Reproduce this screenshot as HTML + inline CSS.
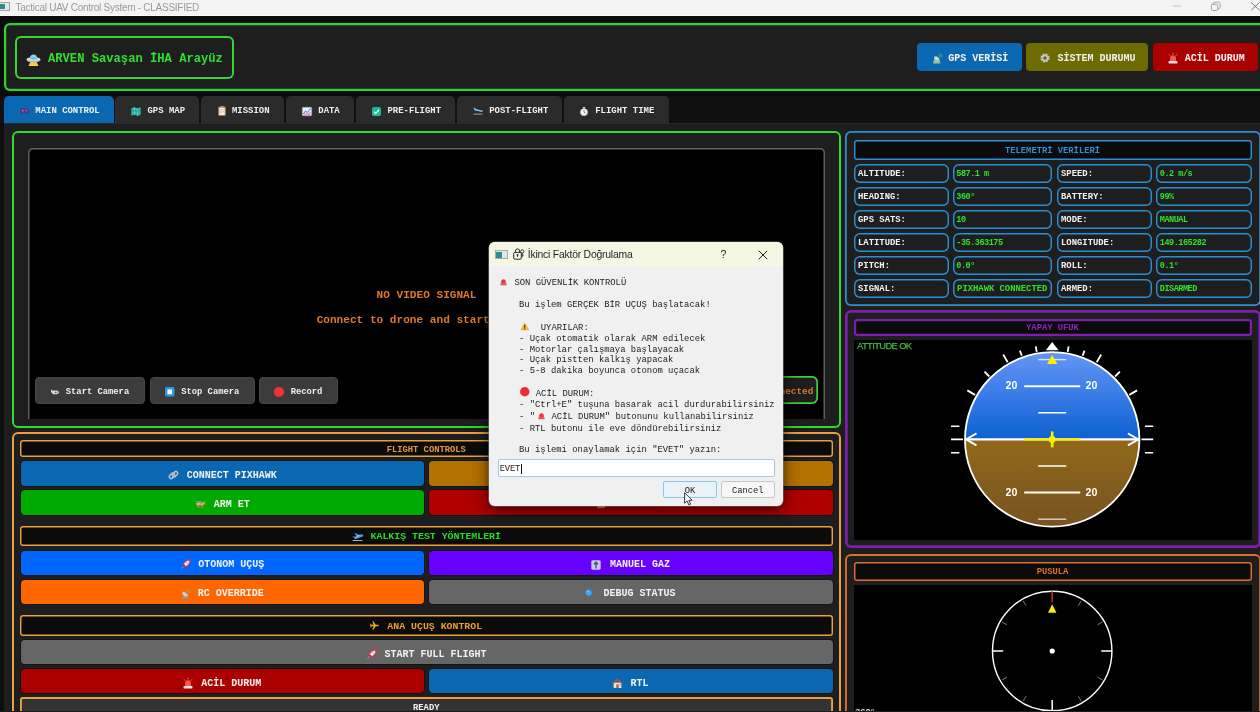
<!DOCTYPE html>
<html lang="tr">
<head>
<meta charset="utf-8">
<title>Tactical UAV Control System - CLASSIFIED</title>
<style>
html,body{margin:0;padding:0;background:#0c0c0c;}
#root{will-change:transform;position:relative;width:1260px;height:712px;overflow:hidden;background:#0c0c0c;font-family:"Liberation Mono",monospace;font-weight:bold;color:#fff;}
#root div,#root span{box-sizing:border-box;}
.a{position:absolute;}
.c{display:flex;align-items:center;justify-content:center;white-space:pre;padding-top:2px;}
.l{display:flex;align-items:center;justify-content:flex-start;white-space:pre;padding-top:2px;}
svg{display:block;overflow:visible;}
.ic{display:inline-block;flex:none;}
/* title bar */
#tb{left:0;top:0;width:1260px;height:16.3px;background:#f3f3f3;border-bottom:1px solid #fdfdfd;font-family:"Liberation Sans",sans-serif;font-weight:normal;color:#9a9a9a;}
/* panels */
.panel{border-radius:6px;background:#1e1e1e;}
.hd{background:#0b0b0b;border-radius:3px;font-size:8.8px;box-shadow:inset 0 0 0 var(--bw,1.45px) var(--bc);}
.btn{position:absolute;border-radius:4px;font-size:10px;color:#f2f2f2;box-shadow:0 0 0 1px #141414;padding-top:4.4px;}
.tab{top:95.5px;height:27.5px;background:#2b2b2b;border-radius:5px 5px 0 0;font-size:8.95px;color:#f0f0f0;padding-left:2.5px;padding-top:4px;}
.cell{height:19px;border-radius:6px;background:#1e1e1e;font-size:8.9px;padding-left:4.5px;box-shadow:inset 0 0 0 1.45px #2a8fd4;}
.lab{color:#f2f2f2;}
.val{color:#2fe02f;font-size:8.5px;letter-spacing:-0.48px;padding-left:3.8px;}
.val.w{font-size:8.85px;letter-spacing:0;padding-left:4.6px;}
.dl{left:0;font-size:8.9px;line-height:11px;height:11px;white-space:pre;color:#1c1c1c;font-weight:normal;}
</style>
</head>
<body>
<div id="root">

<!-- ===== window title bar ===== -->
<div id="tb" class="a">
  <div class="a" style="left:0;top:1.5px;width:10px;height:9px;background:#e4e8ea;border:1px solid #9aa3a8;border-left:none;"><div class="a" style="left:0;top:1px;width:4.5px;height:5px;background:#2c8c86;"></div></div>
  <div class="a" id="tbt" style="left:15.5px;top:0.6px;height:13.5px;line-height:13.5px;font-size:10px;white-space:pre;letter-spacing:-0.27px;">Tactical UAV Control System - CLASSIFIED</div>
  <svg class="a" style="left:1170px;top:0" width="90" height="16" viewBox="0 0 90 16"><g fill="none"><path d="M2.7 6h8" stroke="#c2c2c2" stroke-width="1.1"/><g stroke="#a4a4a4" stroke-width="1"><rect x="41.4" y="4.2" width="6.3" height="6.3" rx="1.5"/><path d="M43.3 4.2v-0.4a1.6 1.6 0 0 1 1.6-1.6h3.5a1.6 1.6 0 0 1 1.6 1.6v3.5a1.6 1.6 0 0 1-1.6 1.6h-0.6"/></g><path d="M81.2 2.5l8.3 7.8M89.5 2.5l-8.3 7.8" stroke="#6e6e6e" stroke-width="0.9"/></g></svg>
</div>

<!-- ===== header panel ===== -->
<div class="a panel" style="left:3.5px;top:23px;width:1280px;height:67.5px;box-shadow:inset 0 0 0 2.2px #2fd42f;"></div>
<div class="a l" style="left:15px;top:35.5px;width:218.5px;height:43px;box-shadow:inset 0 0 0 2px #31d831;border-radius:6px;font-size:12.15px;color:#2fe02f;padding-left:10.5px;padding-top:3.4px;"><span class="ic" style="width:15px;height:13px;margin-right:7.5px;position:relative;top:0.5px"><svg width="15" height="13" viewBox="0 0 15 13"><path d="M4.5 8.5 L2.5 13 H12.5 L10.5 8.5Z" fill="#f2d23c"/><ellipse cx="7.5" cy="6.8" rx="7.2" ry="2.6" fill="#a9b4bd"/><ellipse cx="7.5" cy="6.2" rx="6.6" ry="1.9" fill="#d5dde3"/><path d="M3.9 5.3a3.6 3.8 0 0 1 7.2 0Z" fill="#8fd0e8"/><ellipse cx="7.5" cy="5.4" rx="3.6" ry="1" fill="#6db6d2"/></svg></span>ARVEN Savaşan İHA Arayüz</div>

<!-- header buttons -->
<div class="a c" style="left:917px;top:43px;width:104.5px;height:28px;background:#0a67b1;border-radius:4px;font-size:10px;color:#f2f2f2;padding-left:2px;"><span class="ic" style="width:10px;height:11px;margin-right:6px;"><svg width="10" height="11" viewBox="0 0 10 11"><path d="M1 10.5 L2.5 5 L7 5 L8.5 10.5Z" fill="#9fc2a6"/><path d="M2 3.5 A3.2 3.2 0 0 0 7.6 5.8 L5 3.4Z" fill="#cfe3d2"/><path d="M6.6 2.6a2 2 0 0 1 1.6 1.8M7 0.8a3.6 3.6 0 0 1 3 3.2" stroke="#58c45c" stroke-width="0.9" fill="none"/></svg></span>GPS VERİSİ</div>
<div class="a c" style="left:1026px;top:43px;width:122px;height:28px;background:#6b6b00;border-radius:4px;font-size:10px;color:#f2f2f2;padding-left:2px;"><span class="ic" style="width:10px;height:10px;margin-right:7px;"><svg width="10" height="10" viewBox="0 0 10 10"><circle cx="5" cy="5" r="3.4" fill="none" stroke="#c4c4cc" stroke-width="2.4" stroke-dasharray="1.7 1"/><circle cx="5" cy="5" r="2.6" fill="none" stroke="#c4c4cc" stroke-width="1.6"/></svg></span>SİSTEM DURUMU</div>
<div class="a c" style="left:1153px;top:43px;width:104.5px;height:28px;background:#aa0000;border-radius:4px;font-size:10px;color:#f2f2f2;padding-left:2px;"><span class="ic" style="width:10px;height:11px;margin-right:7px;"><svg width="10" height="11" viewBox="0 0 10 11"><path d="M2 8 V5.2 a3 3 0 0 1 6 0 V8Z" fill="#f15a4a"/><rect x="0.6" y="8" width="8.8" height="2.6" rx="0.6" fill="#e8e2e0"/><path d="M5 0v1.4M1 1.4l1 1.1M9 1.4l-1 1.1" stroke="#ff9a8a" stroke-width="0.9"/></svg></span>ACİL DURUM</div>

<!-- ===== tab bar ===== -->
<div class="a" style="left:0;top:96px;width:1260px;height:27px;background:#101010;"></div>
<div class="a" style="left:0;top:123px;width:1260px;height:600px;background:#0e0e0e;"></div>
<div class="a" style="left:4px;top:123px;width:1260px;height:600px;background:#1e1e1e;"></div>

<div class="a" style="left:4px;top:123px;width:1260px;height:1px;background:#2a2a2a;"></div>
<div class="a c tab" style="left:4px;width:109.5px;background:#0a67b1;"><span class="ic" style="width:9px;height:7px;margin-right:6px;"><svg width="9" height="7" viewBox="0 0 9 7"><path d="M1.6 0.6h5.8a1.6 1.6 0 0 1 1.6 1.8l-0.4 3.2a1 1 0 0 1-1.8 0.4l-0.8-1.2h-3l-0.8 1.2a1 1 0 0 1-1.8-0.4l-0.4-3.2a1.6 1.6 0 0 1 1.6-1.8Z" fill="#5b2f86"/><circle cx="6.4" cy="2.6" r="0.8" fill="#e36a8a"/><path d="M2 2.7h1.6M2.8 1.9v1.6" stroke="#c9b6e2" stroke-width="0.6"/></svg></span>MAIN CONTROL</div>
<div class="a c tab" style="left:115px;width:84px;"><span class="ic" style="width:10px;height:9px;margin-right:6px;"><svg width="10" height="9" viewBox="0 0 10 9"><path d="M0.3 1.2 L3.3 0.3 L6.7 1.2 L9.7 0.3 V7.8 L6.7 8.7 L3.3 7.8 L0.3 8.7Z" fill="#2fb5a8"/><path d="M3.3 0.3V7.8M6.7 1.2V8.7" stroke="#8fe0d8" stroke-width="0.6"/><path d="M1 4.5l2-1.2 2.2 1.5 2.4-1.6 1.6 1" stroke="#1c7f86" stroke-width="0.7" fill="none"/></svg></span>GPS MAP</div>
<div class="a c tab" style="left:201px;width:83px;"><span class="ic" style="width:8px;height:10px;margin-right:6px;"><svg width="8" height="10" viewBox="0 0 8 10"><rect x="0.3" y="0.8" width="7.4" height="9" rx="0.8" fill="#c98a58"/><rect x="1.3" y="1.8" width="5.4" height="7.2" fill="#f4efe8"/><rect x="2.4" y="0" width="3.2" height="1.8" rx="0.5" fill="#9aa3ab"/><path d="M2 3.8h4M2 5.3h4M2 6.8h3" stroke="#b9b2aa" stroke-width="0.6"/></svg></span>MISSION</div>
<div class="a c tab" style="left:286px;width:67.5px;"><span class="ic" style="width:10px;height:9px;margin-right:6px;"><svg width="10" height="9" viewBox="0 0 10 9"><rect x="0.3" y="0.3" width="9.4" height="8.4" rx="0.8" fill="#e9edf6" stroke="#8c9fd0" stroke-width="0.6"/><path d="M1.3 7l2.2-3 1.8 1.6 3.2-4" stroke="#4d6fd6" stroke-width="1" fill="none"/><path d="M1.3 8l2.2-2 1.8 0.8 3.2-2.2V8Z" fill="#e88aa0" opacity="0.8"/></svg></span>DATA</div>
<div class="a c tab" style="left:355.5px;width:99.5px;"><span class="ic" style="width:9.5px;height:9.5px;margin-right:6px;"><svg width="9" height="9" viewBox="0 0 9 9"><rect x="0" y="0" width="9" height="9" rx="1.6" fill="#17b897"/><path d="M2 4.7l1.8 1.8 3.3-3.8" stroke="#fff" stroke-width="1.3" fill="none"/></svg></span>PRE-FLIGHT</div>
<div class="a c tab" style="left:457px;width:105px;"><span class="ic" style="width:10px;height:8px;margin-right:6px;"><svg width="10" height="8" viewBox="0 0 10 8"><path d="M0.5 0.6 L2 0.4 L3.6 2.3 L8 3.3 a1.1 1.1 0 0 1 1.2 1.3 L2.4 3.6 Z" fill="#3b8fe0"/><path d="M0.6 1l0.9 2.3 8 1.6a1 1 0 0 0-1.1-1.4L3.4 2.6Z" fill="#8cc3f2"/><rect x="0.6" y="6.6" width="8.8" height="1" fill="#9aa6b2"/></svg></span>POST-FLIGHT</div>
<div class="a c tab" style="left:563.5px;width:105px;"><span class="ic" style="width:8px;height:9px;margin-right:7px;"><svg width="8" height="9" viewBox="0 0 8 9"><rect x="3" y="0" width="2" height="1.4" fill="#cfcfcf"/><circle cx="4" cy="5.2" r="3.6" fill="#f3f3f3" stroke="#b9b9b9" stroke-width="0.6"/><path d="M4 5.2V3M4 5.2l1.5 1" stroke="#d23a3a" stroke-width="0.8"/></svg></span>FLIGHT TIME</div>



<div class="a panel" style="left:12px;top:131px;width:829px;height:296.5px;box-shadow:inset 0 0 0 2px #31d831;"></div>
<div class="a" style="left:28px;top:147.5px;width:797px;height:271px;background:#000;box-shadow:inset 1.5px 0 0 #5e5e5e,inset -1.5px 0 0 #5e5e5e,inset 0 1.4px 0 #646464;border-radius:5px 5px 0 0;"></div>
<div class="a c" style="left:28px;top:287.5px;width:797px;height:14px;font-size:11.1px;color:#dc782c;padding-top:0.6px;">NO VIDEO SIGNAL</div>
<div class="a c" style="left:28px;top:312px;width:797px;height:14px;font-size:11.1px;color:#dc782c;padding-top:1px;">Connect to drone and start camera</div>
<div class="a c" style="left:35px;top:376.5px;width:110px;height:27.5px;background:#3c3c3c;border:1px solid #474747;border-radius:4px;font-size:8.8px;color:#f0f0f0;padding-top:3.4px;"><span class="ic" style="width:8px;height:6px;margin-right:7px;"><svg width="8" height="6" viewBox="0 0 8 6"><rect x="1.6" y="1.6" width="5" height="3.6" rx="0.7" fill="#e6e6ea"/><path d="M0 0.3l1.8 1.6v2.6L0 3.2Z" fill="#d9d9de"/><circle cx="4.6" cy="3.5" r="1" fill="#8a4a8a"/><rect x="6.4" y="2.4" width="1.6" height="2.2" fill="#c0c0c8"/></svg></span>Start Camera</div>
<div class="a c" style="left:150px;top:376.5px;width:104.5px;height:27.5px;background:#3c3c3c;border:1px solid #474747;border-radius:4px;font-size:8.8px;color:#f0f0f0;padding-top:3.4px;"><span class="ic" style="width:9.5px;height:9.5px;margin-right:6.5px;"><svg width="9.5" height="9.5" viewBox="0 0 10 10"><rect x="0" y="0" width="10" height="10" rx="1.8" fill="#2a9be0"/><rect x="2.5" y="2.5" width="5" height="5" rx="0.6" fill="#f4f8fb"/></svg></span>Stop Camera</div>
<div class="a c" style="left:259px;top:376.5px;width:78.5px;height:27.5px;background:#3c3c3c;border:1px solid #474747;border-radius:4px;font-size:8.8px;color:#f0f0f0;padding-top:3.4px;"><span class="ic" style="width:10px;height:10px;margin-right:6.5px;"><svg width="10" height="10" viewBox="0 0 10 10"><circle cx="5" cy="5" r="5" fill="#f5323c"/></svg></span>Record</div>
<div class="a c" style="left:700px;top:376px;width:117.5px;height:28px;box-shadow:inset 0 0 0 1.7px #3ad03a;border-radius:6px;background:#1e1e1e;font-size:9.4px;color:#dc7a2e;justify-content:flex-end;padding-right:4.2px;">● Disconnected</div>



<div class="a panel" style="left:12px;top:431.5px;width:829px;height:320px;box-shadow:inset 0 0 0 2px #e8a040;"></div>
<div class="a c hd" style="left:20px;top:440px;width:812.5px;height:17px;--bc:#e8a040;color:#e8963a;font-size:8.8px;">FLIGHT CONTROLS</div>
<div class="a c btn" style="left:20.5px;top:461px;width:403.5px;height:24.5px;background:#0a67b1;"><span class="ic" style="width:11px;height:10px;margin-right:8px;position:relative;top:0px"><svg width="11" height="10" viewBox="0 0 11 10"><g fill="none" stroke="#b9c0c8" stroke-width="1.6"><rect x="0.9" y="4.1" width="6" height="3.6" rx="1.8" transform="rotate(-45 3.9 5.9)"/><rect x="4.1" y="2.3" width="6" height="3.6" rx="1.8" transform="rotate(-45 7.1 4.1)"/></g></svg></span>CONNECT PIXHAWK</div>
<div class="a c btn" style="left:428.5px;top:461px;width:404px;height:24.5px;background:#b37100;">&nbsp;</div>
<div class="a c btn" style="left:20.5px;top:490px;width:403.5px;height:24.5px;background:#00aa00;"><span class="ic" style="width:11px;height:9px;margin-right:8px;position:relative;top:0px"><svg width="11" height="9" viewBox="0 0 11 9"><path d="M0.5 1.2h6.5v1H0.5z" fill="#5aa0e8"/><path d="M2 2.6h6.2l1.8-1.4v2.6L8 5.6H3a1.5 1.5 0 0 1-1-3Z" fill="#e8a23a"/><path d="M2.6 3h2.4v1.6H2.6z" fill="#7fd0f0"/><path d="M1.6 7.6h7.4" stroke="#d24a3a" stroke-width="0.9"/><path d="M3.4 5.6v2M7 5.6v2" stroke="#c9c9c9" stroke-width="0.7"/></svg></span>ARM ET</div>
<div class="a c btn" style="left:428.5px;top:490px;width:404px;height:24.5px;background:#b00000;padding-top:0;"><span class="a" style="left:168.5px;top:12.5px;width:7.5px;height:5.4px;background:#e8a860;border-radius:1px;"></span>DISARM</div>
<div class="a c hd" style="left:20px;top:525.5px;width:812.5px;height:20.5px;--bc:#e8a040;color:#22dd22;font-size:9.9px;"><span class="ic" style="width:11px;height:9px;margin-right:8px;position:relative;top:0px"><svg width="11" height="9" viewBox="0 0 11 9"><path d="M0.6 4.6l1.3-0.3 1.2 1 2-0.9-2.6-2.6 1.3-0.5 3.8 2 2-0.9a1.1 1.1 0 0 1 1 2L3.4 7.3Z" fill="#4a9be8"/><path d="M3 5.4l5.6-2.6" stroke="#bfe0fa" stroke-width="0.7"/><rect x="0.6" y="8" width="9.8" height="1" fill="#a6b2be"/></svg></span>KALKIŞ TEST YÖNTEMLERİ</div>
<div class="a c btn" style="left:20.5px;top:550.5px;width:403.5px;height:24.5px;background:#0066ff;"><span class="ic" style="width:11px;height:11px;margin-right:7px;position:relative;top:0px"><svg width="11" height="11" viewBox="0 0 11 11"><path d="M10.7 0.3c-3.4-0.1-6 1.6-8 5l3 3c3.4-2 5.1-4.6 5-8Z" fill="#e2334f"/><path d="M9.6 1.4c-2.4 0.2-4.2 1.5-5.6 3.6l2 2c2.1-1.4 3.4-3.2 3.6-5.6Z" fill="#f4f1f3"/><path d="M10.7 0.3c-1.1 0-2.1 0.2-3 0.6l2.4 2.4c0.4-0.9 0.6-1.9 0.6-3Z" fill="#e2334f"/><circle cx="7.2" cy="3.8" r="0.9" fill="#7fc4ee"/><path d="M3 6L0.9 6.6 2.6 7.6ZM5 8L4.4 10.1 3.4 8.4Z" fill="#c9283f"/><path d="M2.9 7.4L0.6 10.4 3.6 8.1Z" fill="#f6b64a"/></svg></span>OTONOM UÇUŞ</div>
<div class="a c btn" style="left:428.5px;top:550.5px;width:404px;height:24.5px;background:#6600ff;"><span class="ic" style="width:10px;height:10px;margin-right:9px;position:relative;top:0px"><svg width="10" height="10" viewBox="0 0 10 10"><rect x="0.3" y="0.3" width="9.4" height="9.4" rx="1.4" fill="#cfc9ee"/><path d="M5 1.6v6.8" stroke="#3d6ea6" stroke-width="1.6"/><rect x="2.8" y="2.6" width="4.4" height="2" rx="0.4" fill="#2d5a90"/><path d="M1.6 2.2h1.4M1.6 7.8h1.4M7 2.2h1.4M7 7.8h1.4" stroke="#cfdbe4" stroke-width="0.6"/></svg></span>MANUEL GAZ</div>
<div class="a c btn" style="left:20.5px;top:579.5px;width:403.5px;height:24.5px;background:#ff6600;"><span class="ic" style="width:10px;height:10px;margin-right:7px;position:relative;top:0px"><svg width="10" height="10" viewBox="0 0 10 10"><path d="M1 9.6L3 5.4l3 0.2 1.2 4Z" fill="#8fa0ad"/><path d="M1.2 2.6A4 4 0 0 0 7.4 6.6L4.4 3.4Z" fill="#cbd5dc"/><path d="M4.6 3.6l2-2" stroke="#9aa6b0" stroke-width="0.7"/><path d="M6.4 2.4a1.8 1.8 0 0 1 1.4 1.6M7 0.6a3.4 3.4 0 0 1 2.6 3" stroke="#6cc46c" stroke-width="0.8" fill="none"/></svg></span>RC OVERRIDE</div>
<div class="a c btn" style="left:428.5px;top:579.5px;width:404px;height:24.5px;background:#666666;"><span class="ic" style="width:10px;height:10px;margin-right:8px;position:relative;top:0px"><svg width="10" height="10" viewBox="0 0 10 10"><path d="M6 6l3.4 3.4" stroke="#5a6670" stroke-width="1.6"/><circle cx="3.8" cy="3.8" r="3.2" fill="#4aa8f0" stroke="#2b86d8" stroke-width="0.9"/><path d="M2 3.2a2 2 0 0 1 1.6-1.4" stroke="#cfeaff" stroke-width="0.7" fill="none"/></svg></span>DEBUG STATUS</div>
<div class="a c hd" style="left:20px;top:615px;width:812.5px;height:20.5px;--bc:#e8a040;color:#e8a030;font-size:9.9px;"><span class="ic" style="width:10px;height:10px;margin-right:7px;position:relative;top:0px"><svg width="9" height="9" viewBox="0 0 10 10"><path d="M9.8 5a0.9 0.9 0 0 0-0.9-0.9H6.4L3.8 0.2H2.7L4 4.1H1.8L0.9 3H0.1L0.6 5 0.1 7H0.9L1.8 5.9H4L2.7 9.8H3.8L6.4 5.9H8.9A0.9 0.9 0 0 0 9.8 5Z" fill="#f0a828"/></svg></span>ANA UÇUŞ KONTROL</div>
<div class="a c btn" style="left:20.5px;top:640px;width:812px;height:24.1px;background:#666666;"><span class="ic" style="width:11px;height:11px;margin-right:7px;position:relative;top:0px"><svg width="11" height="11" viewBox="0 0 11 11"><path d="M10.7 0.3c-3.4-0.1-6 1.6-8 5l3 3c3.4-2 5.1-4.6 5-8Z" fill="#e2334f"/><path d="M9.6 1.4c-2.4 0.2-4.2 1.5-5.6 3.6l2 2c2.1-1.4 3.4-3.2 3.6-5.6Z" fill="#f4f1f3"/><path d="M10.7 0.3c-1.1 0-2.1 0.2-3 0.6l2.4 2.4c0.4-0.9 0.6-1.9 0.6-3Z" fill="#e2334f"/><circle cx="7.2" cy="3.8" r="0.9" fill="#7fc4ee"/><path d="M3 6L0.9 6.6 2.6 7.6ZM5 8L4.4 10.1 3.4 8.4Z" fill="#c9283f"/><path d="M2.9 7.4L0.6 10.4 3.6 8.1Z" fill="#f6b64a"/></svg></span>START FULL FLIGHT</div>
<div class="a c btn" style="left:20.5px;top:668.8px;width:403.5px;height:24.4px;background:#aa0000;"><span class="ic" style="width:10px;height:11px;margin-right:8px;position:relative;top:0px"><svg width="10" height="11" viewBox="0 0 10 11"><path d="M2 8 V5.2 a3 3 0 0 1 6 0 V8Z" fill="#f15a4a"/><rect x="0.6" y="8" width="8.8" height="2.6" rx="0.6" fill="#e8e2e0"/><path d="M5 0v1.4M1 1.4l1 1.1M9 1.4l-1 1.1" stroke="#ff9a8a" stroke-width="0.9"/></svg></span>ACİL DURUM</div>
<div class="a c btn" style="left:428.5px;top:668.8px;width:404px;height:24.4px;background:#0a67b1;"><span class="ic" style="width:11px;height:10px;margin-right:7px;position:relative;top:0px"><svg width="11" height="10" viewBox="0 0 11 10"><path d="M1.6 4.6h7.8V10H1.6z" fill="#efe3cf"/><path d="M0.2 5L5.5 0.4 10.8 5 9.8 5.9 5.5 2.2 1.2 5.9Z" fill="#d2483a"/><rect x="4.3" y="6.4" width="2.4" height="3.6" fill="#a8683a"/><rect x="7.2" y="6" width="1.6" height="1.6" fill="#6cb6e6"/><path d="M0.4 10c0.8-1.4 1.8-1.4 2.2 0Z" fill="#4aa84a"/></svg></span>RTL</div>
<div class="a c" style="left:20px;top:697.3px;width:812.5px;height:30px;background:#333;box-shadow:inset 0 0 0 1.9px #e8a040;border-radius:3px;font-size:8.8px;color:#f2f2f2;align-items:flex-start;padding-top:5.4px;">READY</div>



<div class="a panel" style="left:845px;top:131px;width:416px;height:175px;box-shadow:inset 0 0 0 1.8px #2f8fd0;"></div>
<div class="a c hd" style="left:853.5px;top:139.5px;width:398px;height:20px;--bc:#2a8fd4;color:#2a8fd4;">TELEMETRİ VERİLERİ</div>
<div class="a l cell lab" style="left:853.5px;top:163.5px;width:95.5px;">ALTITUDE:</div>
<div class="a l cell val" style="left:952.5px;top:163.5px;width:99.5px;">587.1 m</div>
<div class="a l cell lab" style="left:1056.5px;top:163.5px;width:95.5px;">SPEED:</div>
<div class="a l cell val" style="left:1156px;top:163.5px;width:95.5px;">0.2 m/s</div>
<div class="a l cell lab" style="left:853.5px;top:186.5px;width:95.5px;">HEADING:</div>
<div class="a l cell val" style="left:952.5px;top:186.5px;width:99.5px;">360°</div>
<div class="a l cell lab" style="left:1056.5px;top:186.5px;width:95.5px;">BATTERY:</div>
<div class="a l cell val" style="left:1156px;top:186.5px;width:95.5px;">99%</div>
<div class="a l cell lab" style="left:853.5px;top:209.6px;width:95.5px;">GPS SATS:</div>
<div class="a l cell val" style="left:952.5px;top:209.6px;width:99.5px;">10</div>
<div class="a l cell lab" style="left:1056.5px;top:209.6px;width:95.5px;">MODE:</div>
<div class="a l cell val" style="left:1156px;top:209.6px;width:95.5px;">MANUAL</div>
<div class="a l cell lab" style="left:853.5px;top:232.6px;width:95.5px;">LATITUDE:</div>
<div class="a l cell val" style="left:952.5px;top:232.6px;width:99.5px;">-35.363175</div>
<div class="a l cell lab" style="left:1056.5px;top:232.6px;width:95.5px;">LONGITUDE:</div>
<div class="a l cell val" style="left:1156px;top:232.6px;width:95.5px;">149.165282</div>
<div class="a l cell lab" style="left:853.5px;top:255.6px;width:95.5px;">PITCH:</div>
<div class="a l cell val" style="left:952.5px;top:255.6px;width:99.5px;">0.0°</div>
<div class="a l cell lab" style="left:1056.5px;top:255.6px;width:95.5px;">ROLL:</div>
<div class="a l cell val" style="left:1156px;top:255.6px;width:95.5px;">0.1°</div>
<div class="a l cell lab" style="left:853.5px;top:278.6px;width:95.5px;">SIGNAL:</div>
<div class="a l cell val w" style="left:952.5px;top:278.6px;width:99.5px;">PIXHAWK CONNECTED</div>
<div class="a l cell lab" style="left:1056.5px;top:278.6px;width:95.5px;">ARMED:</div>
<div class="a l cell val" style="left:1156px;top:278.6px;width:95.5px;">DISARMED</div>



<div class="a panel" style="left:845px;top:309.5px;width:416px;height:238.5px;box-shadow:inset 0 0 0 2.7px #7c1fac;"></div>
<div class="a c hd" style="left:853.5px;top:318.5px;width:398px;height:17px;--bw:2.2px;--bc:#7c1fac;color:#8a22c0;">YAPAY UFUK</div>
<div class="a" style="left:854px;top:339.5px;width:397.5px;height:200px;background:#000;"></div>
<div class="a" style="left:857px;top:340.3px;height:12px;line-height:12px;font-family:'Liberation Sans',sans-serif;font-weight:normal;font-size:9.4px;color:#3fb83f;white-space:pre;letter-spacing:-0.62px;-webkit-text-stroke:0.25px #3fb83f;" id="attok">ATTITUDE OK</div>
<svg class="a" style="left:854px;top:339.5px" width="397.5" height="200" viewBox="854 339.5 397.5 200">
<defs><linearGradient id="sky" x1="0" y1="0" x2="0" y2="1"><stop offset="0" stop-color="#6596f6"/><stop offset="0.55" stop-color="#3378e4"/><stop offset="1" stop-color="#0c61d0"/></linearGradient><linearGradient id="gnd" x1="0" y1="0" x2="0" y2="1"><stop offset="0" stop-color="#91691a"/><stop offset="1" stop-color="#775321"/></linearGradient><clipPath id="hc"><circle cx="1052.2" cy="438.9" r="87.2"/></clipPath></defs>
<g clip-path="url(#hc)"><rect x="965.0" y="351.7" width="174.4" height="87.2" fill="url(#sky)"/><rect x="965.0" y="438.9" width="174.4" height="87.2" fill="url(#gnd)"/>
<path d="M1038.2 412.3H1066.2" stroke="#fff" stroke-width="1.4" opacity="1"/><path d="M1038.2 465.5H1066.2" stroke="#fff" stroke-width="1.4" opacity="1"/><path d="M1024.2 385.7H1080.2" stroke="#fff" stroke-width="2" opacity="1"/><path d="M1024.2 492.1H1080.2" stroke="#fff" stroke-width="2" opacity="1"/><path d="M1038.2 359.1H1066.2" stroke="#fff" stroke-width="1.4" opacity="0.75"/><path d="M1038.2 518.7H1066.2" stroke="#fff" stroke-width="1.4" opacity="0.75"/>
</g>
<circle cx="1052.2" cy="438.9" r="87.2" fill="none" stroke="#fff" stroke-width="1.8"/>
<text x="1011.5" y="388.6" text-anchor="middle" font-family="Liberation Sans, sans-serif" font-weight="bold" font-size="10.6" fill="#fff">20</text><text x="1091.5" y="388.6" text-anchor="middle" font-family="Liberation Sans, sans-serif" font-weight="bold" font-size="10.6" fill="#fff">20</text><text x="1011.5" y="495" text-anchor="middle" font-family="Liberation Sans, sans-serif" font-weight="bold" font-size="10.6" fill="#fff">20</text><text x="1091.5" y="495" text-anchor="middle" font-family="Liberation Sans, sans-serif" font-weight="bold" font-size="10.6" fill="#fff">20</text>
<path d="M965.0 438.9H1139.4" stroke="#fff" stroke-width="2.2"/><path d="M976.5 432.9L966.0 438.9L976.5 444.9M1127.9 432.9L1138.4 438.9L1127.9 444.9" stroke="#fff" stroke-width="1.8" fill="none"/>
<path d="M1024.2 438.9H1080.2" stroke="#f7f000" stroke-width="2.4"/><path d="M1052.2 430.9V446.9" stroke="#f7f000" stroke-width="2.6"/><circle cx="1052.2" cy="438.9" r="3.4" fill="#f7f000"/>
<path d="M1052.2 354.6L1057.4 363.4H1047.0Z" fill="#f7f000"/><path d="M1052.2 341.6L1058.6000000000001 349.8H1045.8Z" fill="#fff"/>
<path d="M1036.7 351.3L1035.8 345.8M1067.7 351.3L1068.6 345.8M1021.8 355.3L1019.9 350.1M1082.6 355.3L1084.5 350.1M1007.7 361.8L1003.2 354.0M1096.7 361.8L1101.2 354.0M989.3 376.0L984.5 371.2M1115.1 376.0L1119.9 371.2M975.1 394.4L967.3 389.9M1129.3 394.4L1137.1 389.9" stroke="#fff" stroke-width="1.8" fill="none"/>
<path d="M951 425.8H959.4M951 438.9H963M951 452.2H959.4M1145 425.8H1153.2M1141.4 438.9H1153.2M1145 452.2H1153.2" stroke="#fff" stroke-width="1.6"/>
</svg>



<div class="a panel" style="left:845px;top:553.5px;width:416px;height:200px;box-shadow:inset 0 0 0 1.9px #de6e2c;"></div>
<div class="a c hd" style="left:853.5px;top:561.5px;width:398px;height:19px;--bc:#de6e2c;color:#de6e2c;">PUSULA</div>
<div class="a" style="left:854px;top:585px;width:397.5px;height:140px;background:#000;"></div>
<svg class="a" style="left:854px;top:585px" width="397.5" height="127" viewBox="854 585 397.5 127">
<circle cx="1052.2" cy="651" r="59.7" fill="none" stroke="#fff" stroke-width="1.4"/>
<path d="M1111.9 651.0L1101.2 651.0M1052.2 710.7L1052.2 700.0M992.5 651.0L1003.2 651.0" stroke="#fff" stroke-width="1.5"/><path d="M1052.2 591.3V602" stroke="#c83030" stroke-width="1.5"/>
<path d="M1081.2 600.8L1078.4 605.7M1102.4 622.0L1097.5 624.9M1102.4 680.0L1097.5 677.1M1081.2 701.2L1078.4 696.3M1023.2 701.2L1026.0 696.3M1002.0 680.0L1006.9 677.1M1002.0 622.0L1006.9 624.9M1023.2 600.8L1026.0 605.7" stroke="#8a8a8a" stroke-width="0.9"/>
<path d="M1052.2 604.2L1056.4 612.8H1048.0Z" fill="#f7f000"/><circle cx="1052.2" cy="651" r="2.6" fill="#fff"/>
<text x="855" y="714.5" font-family="Liberation Sans, sans-serif" font-size="9.5" fill="#d0d0d0">360°</text>
</svg>



<div class="a" id="dlg" style="left:488.5px;top:242px;width:294.7px;height:264px;background:#f0f0f0;border-radius:6px;box-shadow:0 0 0 0.6px rgba(150,150,150,.7),0 6px 18px rgba(0,0,0,.55),0 0 6px rgba(0,0,0,.35);overflow:hidden;font-weight:normal;color:#1c1c1c;">
<div class="a" style="left:0;top:0;width:295px;height:24px;background:#f4f8e2;"></div>
<div class="a" style="left:6px;top:7.5px;width:13px;height:9.5px;background:#e2e6e8;border:1px solid #a3acb0;"><div class="a" style="left:0.5px;top:1.5px;width:5.5px;height:5.5px;background:#2c8c86;"></div></div>
<svg class="a" style="left:24px;top:6px" width="12" height="12" viewBox="0 0 12 12"><rect x="0.7" y="4.4" width="7.6" height="6.8" rx="1.2" fill="none" stroke="#2a2a2a" stroke-width="1"/><path d="M2.4 4.4V3a2.1 2.1 0 0 1 4.2 0v1.4" fill="none" stroke="#2a2a2a" stroke-width="1"/><circle cx="4.5" cy="7" r="0.9" fill="#2a2a2a"/><path d="M4.5 7v2" stroke="#2a2a2a" stroke-width="0.9"/><circle cx="9.3" cy="3.4" r="1.7" fill="#f4f8e2" stroke="#2a2a2a" stroke-width="0.9"/><path d="M9.3 5v4.2M9.3 7.4h1.3" stroke="#2a2a2a" stroke-width="0.9" fill="none"/></svg>
<div class="a" id="dlgt" style="left:39.3px;top:5.2px;height:16px;line-height:16px;font-family:'Liberation Sans',sans-serif;font-size:10.4px;letter-spacing:-0.22px;color:#1f1f1f;white-space:pre;">İkinci Faktör Doğrulama</div>
<div class="a" style="left:232px;top:4px;height:16px;line-height:16px;font-family:'Liberation Sans',sans-serif;font-size:10.5px;color:#222;">?</div>
<svg class="a" style="left:269.5px;top:7.5px" width="10" height="10" viewBox="0 0 10 10"><path d="M0.8 0.8l8.4 8.4M9.2 0.8L0.8 9.2" stroke="#222" stroke-width="1"/></svg>
<div class="a dl" style="left:11.5px;top:35.90px;"><svg width="7" height="7.5" viewBox="0 0 10 11" style="display:inline-block;vertical-align:-0.5px"><path d="M1.6 8 V5.2 a3.4 3.4 0 0 1 6.8 0 V8Z" fill="#ef3340"/><rect x="0.4" y="7.6" width="9.2" height="3" rx="0.6" fill="#e0525a"/></svg><span style="display:inline-block;width:7.4px"></span>SON GÜVENLİK KONTROLÜ</div>
<div class="a dl" style="left:30.5px;top:57.81px;">Bu işlem GERÇEK BİR UÇUŞ başlatacak!</div>
<div class="a dl" style="left:31.3px;top:79.60px;"><svg width="9.5" height="8.5" viewBox="0 0 10 9" style="display:inline-block;vertical-align:-0.5px"><path d="M5 0.3L9.8 8.7H0.2Z" fill="#f5b73a"/><path d="M5 3v3" stroke="#3a2a08" stroke-width="1.1"/><circle cx="5" cy="7.3" r="0.6" fill="#3a2a08"/></svg><span style="display:inline-block;width:11.5px"></span>UYARILAR:</div>
<div class="a dl" style="left:30.5px;top:91.90px;">- Uçak otomatik olarak ARM edilecek</div>
<div class="a dl" style="left:30.5px;top:102.71px;">- Motorlar çalışmaya başlayacak</div>
<div class="a dl" style="left:30.5px;top:113.40px;">- Uçak pistten kalkış yapacak</div>
<div class="a dl" style="left:30.5px;top:124.21px;">- 5-8 dakika boyunca otonom uçacak</div>
<div class="a dl" style="left:31.3px;top:145.10px;"><svg width="9.5" height="9.5" viewBox="0 0 10 10" style="display:inline-block;vertical-align:-1px"><circle cx="5" cy="5" r="5" fill="#f02c34"/></svg><span style="display:inline-block;width:6.5px"></span>ACİL DURUM:</div>
<div class="a dl" style="left:30.5px;top:157.90px;">- "Ctrl+E" tuşuna basarak acil durdurabilirsiniz</div>
<div class="a dl" style="left:30.5px;top:169.90px;">- "<span style="display:inline-block;width:3px"></span><svg width="7" height="7.5" viewBox="0 0 10 11" style="display:inline-block;vertical-align:-0.5px"><path d="M1.6 8 V5.2 a3.4 3.4 0 0 1 6.8 0 V8Z" fill="#ef3340"/><rect x="0.4" y="7.6" width="9.2" height="3" rx="0.6" fill="#e0525a"/></svg><span style="display:inline-block;width:6.5px"></span>ACİL DURUM" butonunu kullanabilirsiniz</div>
<div class="a dl" style="left:30.5px;top:181.60px;">- RTL butonu ile eve döndürebilirsiniz</div>
<div class="a dl" style="left:30.5px;top:202.60px;">Bu işlemi onaylamak için "EVET" yazın:</div>
<div class="a l" style="left:9px;top:217px;width:277px;height:17.5px;background:#fff;border:1px solid #9ccbea;border-radius:2px;font-size:8.8px;padding-left:1.2px;color:#1c1c1c;letter-spacing:-0.15px;">EVET<span style="display:inline-block;width:1px;height:10.5px;background:#111;margin-left:0.6px;"></span></div>
<div class="a c" style="left:174.3px;top:239px;width:54.5px;height:17px;background:#e9f2f9;border:1px solid #8fc3e8;border-radius:2px;font-size:8.8px;">OK</div>
<div class="a c" style="left:232.3px;top:239px;width:54px;height:17px;background:#f7f7f7;border:1px solid #c6c6c6;border-radius:2px;font-size:8.8px;">Cancel</div>
</div>
<svg class="a" style="left:683.5px;top:492px" width="9" height="14" viewBox="0 0 9 14"><path d="M0.6 0.8V11.2L3.1 8.9L4.9 13L6.6 12.2L4.8 8.3H8.2Z" fill="#fff" stroke="#222" stroke-width="0.9" stroke-linejoin="round"/></svg>


<div class="a" style="left:0;top:710.6px;width:1260px;height:2px;background:#1b1b1b;"></div>
</div>
</body>
</html>
